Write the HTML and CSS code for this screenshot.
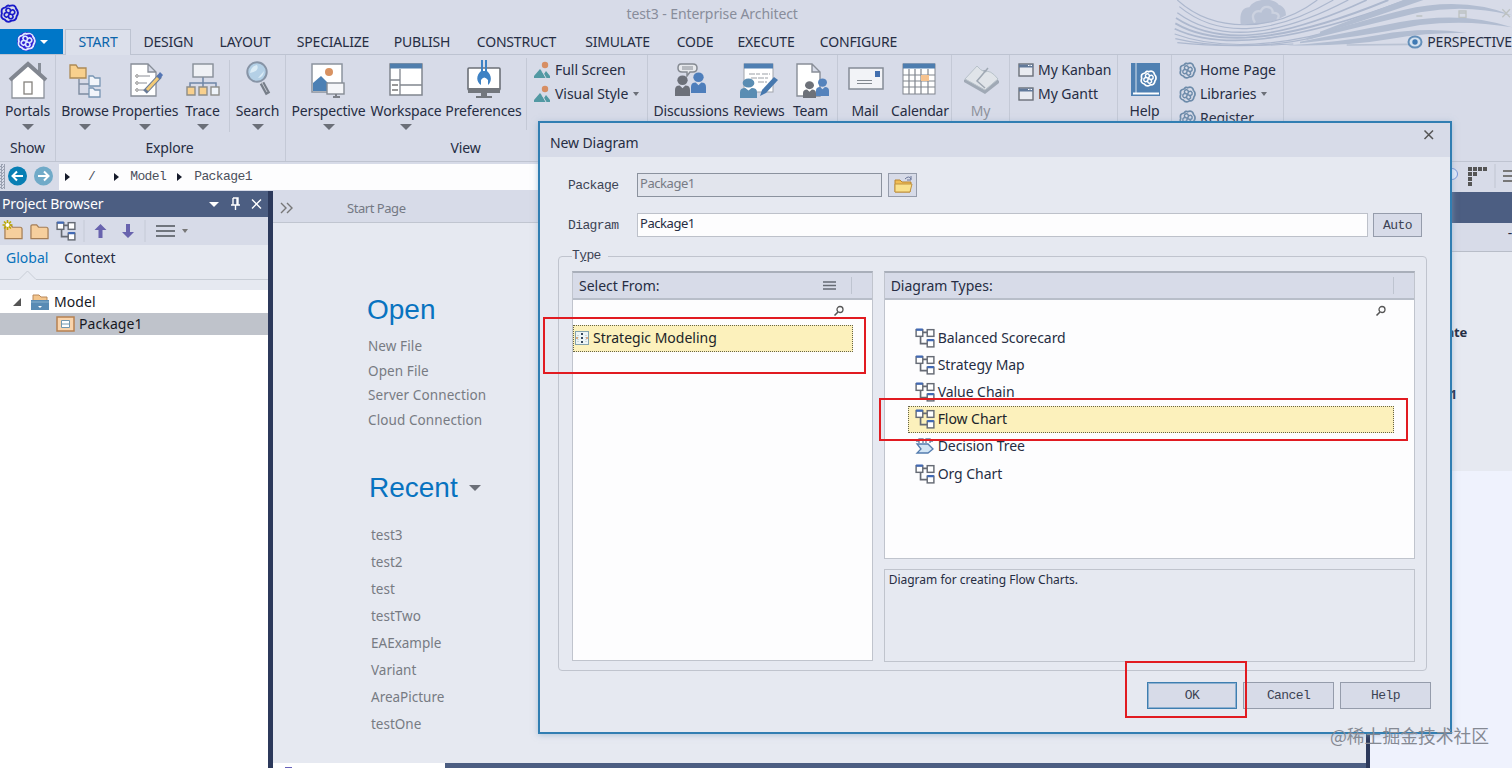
FILE: index.html
```
<!DOCTYPE html>
<html lang="en">
<head>
<meta charset="utf-8">
<title>test3 - Enterprise Architect</title>
<link rel="stylesheet" href="styles.css">
</head>
<body>
<svg class="defs" width="0" height="0" aria-hidden="true">
  <symbol id="knot" viewBox="0 0 20 20">
    <path d="M10 2Q16 0 17 5Q20.500 9 17.500 13Q17 18 12 17.500Q8 20.500 5 16.500Q0 15 2 10Q.5 4 6 3.500Q8 .5 10 2Z" fill="none" stroke="currentColor" stroke-width="2"/>
    <path d="M10 10C6 9 5 6 8 4.500C11 4 12 7 10 10C11 6 14 5 15.500 8C16 11 13 12 10 10C14 11 15 14 12 15.500C9 16 8 13 10 10C9 14 6 15 4.500 12C4 9 7 8 10 10" fill="none" stroke="currentColor" stroke-width="1.700"/>
  </symbol>
  <symbol id="diag" viewBox="0 0 18 18">
    <path d="M7 4H11M5 8V14H11" fill="none" stroke="#666b75" stroke-width="1.500"/>
    <g fill="#fff" stroke="#666b75" stroke-width="1.300"><rect x="1" y="1.500" width="6" height="6"/><rect x="11" y="1.500" width="6" height="6"/><rect x="11" y="11" width="6" height="6"/></g>
    <path d="M1 1.500H7M11 11H17" stroke="#4169b5" stroke-width="2"/>
  </symbol>
  <symbol id="picture" viewBox="0 0 18 18">
    <path d="M1 17V15L7 8L11 13L13 10L17 15V17Z" fill="#5299a3"/><circle cx="12" cy="4" r="3.200" fill="#d78e63"/><path d="M9 10L13 17" stroke="#d7dbe8" stroke-width="1"/>
  </symbol>
  <symbol id="win" viewBox="0 0 16 14">
    <rect x="1" y="1" width="14" height="12" fill="#e9ebf1" stroke="#6b7079" stroke-width="1.400"/><path d="M1 3H15" stroke="#61799a" stroke-width="3"/><path d="M10 2.500H14" stroke="#fff" stroke-dasharray="1.500 1"/>
  </symbol>
  <symbol id="lens" viewBox="0 0 12 12"><circle cx="7" cy="4.500" r="3" fill="none" stroke="#555" stroke-width="1.300"/><path d="M5 7L1.500 10.500" stroke="#555" stroke-width="1.600"/></symbol>
  <symbol id="person" viewBox="0 0 16 24" preserveAspectRatio="none"><circle cx="8" cy="6" r="5.500"/><path d="M0 24V17Q0 12 5 12L8 15L11 12Q16 12 16 17V24Z"/></symbol>
  <symbol id="folder" viewBox="0 0 20 18"><path d="M1 16V3Q1 1.500 2.500 1.500H7L9 4H17Q19 4 19 6V16Z" fill="#f6cf9d" stroke="#a57e56" stroke-width="1.300"/></symbol>
</svg>

<div class="app">
  <header class="titlebar">
    <svg class="app-logo" width="19" height="19"><use href="#knot"/></svg>
    <span class="window-title">test3 - Enterprise Architect</span>
    <svg class="waves" width="372" height="54" viewBox="0 0 1116 162">
      <path d="M302 72C298 38 308 22 328 22C342-6 402-8 416 14C434 20 438 34 438 46C400 68 350 78 302 72Z" fill="#b9c2d5"/>
      <path d="M345 68C330 45 345 30 362 34C372 12 400 20 398 38C416 38 420 48 412 58" fill="none" stroke="#ccd2e0" stroke-width="7"/>
      <g fill="none" stroke="#adb8ce" stroke-width="3.500">
        <path d="M112 0C220 98 400 100 532 0"/>
        <path d="M118 20C230 112 390 110 580 0"/>
        <path d="M112 38C230 124 400 118 625 0" stroke-width="4"/>
        <path d="M108 54C230 134 410 126 680 0" stroke-width="5"/>
        <path d="M106 70C230 142 430 130 745 0" stroke-width="6"/>
        <path d="M104 86C240 150 450 130 790 4" stroke-width="5"/>
        <path d="M104 102C240 152 430 142 640 74"/>
        <path d="M106 116C230 146 400 142 520 112"/>
        <path d="M112 128C220 140 350 138 460 132"/>
      </g>
      <path d="M540 95Q680 42 790 0H850Q690 56 540 103Z" fill="#b2bdd1"/>
      <path d="M500 113Q700 52 790 30Q970-12 1116 46Q980 12 840 37Q680 76 500 120Z" fill="#b2bdd1"/>
      <path d="M480 125Q650 92 780 66Q970 32 1116 82Q980 58 840 75Q660 111 480 130Z" fill="#b2bdd1"/>
      <path d="M440 136Q600 126 720 104Q850 80 980 98Q850 98 750 117Q620 140 440 136Z" fill="#b2bdd1"/>
      <path d="M620 135L810 133" stroke="#b9c2d3" stroke-width="5"/>
      <path d="M829 48H847M957 33H978V52H957ZM957 39H978M1087 28L1110 52M1110 28L1087 52" stroke="#bdc2c2" stroke-width="4" fill="none"/>
    </svg>
  </header>

  <nav class="tabs">
    <div class="file-tab"><svg class="file-logo" width="19" height="19"><use href="#knot"/></svg><i class="caret caret-white"></i></div>
    <span class="tab tab-start">START</span><span class="tab tab-design">DESIGN</span><span class="tab tab-layout">LAYOUT</span><span class="tab tab-specialize">SPECIALIZE</span><span class="tab tab-publish">PUBLISH</span><span class="tab tab-construct">CONSTRUCT</span><span class="tab tab-simulate">SIMULATE</span><span class="tab tab-code">CODE</span><span class="tab tab-execute">EXECUTE</span><span class="tab tab-configure">CONFIGURE</span>
    <span class="perspective"><svg width="16" height="14" viewBox="0 0 16 14"><ellipse cx="8" cy="7" rx="6.500" ry="5.500" fill="#d4e1ef" stroke="#638fb9" stroke-width="2"/><circle cx="8" cy="7" r="2.700" fill="#3f79b3"/></svg>PERSPECTIVE</span>
  </nav>

  <section class="ribbon">
    <div class="group g-show">
      <div class="tools">
        <div class="tool w55"><svg width="40" height="38" viewBox="0 0 40 38"><path d="M30 2H33V14L30 10Z" fill="#888e98"/><path d="M4 18L20 3L36 18V37H4Z" fill="#fff" stroke="#8d929b" stroke-width="1.300"/><path d="M2 19L20 3L38 19" fill="none" stroke="#818690" stroke-width="4"/><rect x="16" y="21" width="8" height="12" fill="#fff" stroke="#85827d" stroke-width="1.300"/></svg><b>Portals</b><i class="caret"></i></div>
      </div>
      <div class="group-name">Show</div>
    </div>
    <div class="group g-explore">
      <div class="tools">
        <div class="tool w58"><svg width="34" height="38" viewBox="0 0 34 38"><path d="M11 18V33H21M11 23H21" fill="none" stroke="#7e8ca0" stroke-width="1.400"/><path d="M2 17V4H8L10 7H18V17Z" fill="#f8d08d" stroke="#ad8a55" stroke-width="1.300"/><path d="M21 25V15H25L27 17H32V25ZM21 36V27H25L27 29H32V36Z" fill="#f2f5fa" stroke="#7895b3" stroke-width="1.300"/></svg><b>Browse</b><i class="caret"></i></div>
        <div class="tool w62"><svg width="36" height="38" viewBox="0 0 36 38"><path d="M4 3H21L29 11V35H4ZM21 3V11H29" fill="#fff" stroke="#878d97" stroke-width="1.300"/><path d="M12 15H23M12 22H20M12 29H17" stroke="#8c8f97"/><g fill="none" stroke="#888"><circle cx="10" cy="15" r="1.300"/><circle cx="10" cy="22" r="1.300"/><circle cx="10" cy="29" r="1.300"/></g><path d="M18 31L33 15" stroke="#687a96" stroke-width="5"/><path d="M20 29L31 17" stroke="#f3ca76" stroke-width="3"/><path d="M30 15L33 18L36 14L33 11Z" fill="#5576b4"/></svg><b>Properties</b><i class="caret"></i></div>
        <div class="tool w53"><svg width="36" height="38" viewBox="0 0 36 38"><path d="M18 16V27M5 27V22H31V27" fill="none" stroke="#6f87a6" stroke-width="1.500"/><rect x="8" y="3" width="20" height="13" fill="#eff1f5" stroke="#878e98" stroke-width="1.400"/><g stroke="#8d8d89" stroke-width="1.400"><path d="M2 26H10V34H2ZM14 26H22V34H14Z" fill="#f8d08d"/><rect x="26" y="26" width="8" height="8" fill="#eff4fa"/></g></svg><b>Trace</b><i class="caret"></i></div>
        <div class="tool w56 separated"><svg width="30" height="38" viewBox="0 0 30 38"><path d="M19 22L25 33" stroke="#777e89" stroke-width="5"/><path d="M18 20L24 31" stroke="#c2c7d0"/><circle cx="14" cy="11" r="9.700" fill="#b4d0e6" stroke="#8794a6" stroke-width="2"/><path d="M7 12Q8 5 14 4Q17 10 7 12M15 17Q20 17 21 10" fill="#dcecf6"/></svg><b>Search</b><i class="caret"></i></div>
      </div>
      <div class="group-name">Explore</div>
    </div>
    <div class="group g-view">
      <div class="tools">
        <div class="tool w85"><svg width="38" height="38" viewBox="0 0 38 38"><rect x="2" y="3" width="30" height="28" fill="#fff" stroke="#8c949f" stroke-width="1.500"/><circle cx="19" cy="11" r="4" fill="#d89262"/><path d="M3 30V22L11 15L18 22V30Z" fill="#4c80b4"/><rect x="17" y="22" width="17" height="11" fill="#f5f6f9" stroke="#868c94" stroke-width="1.400"/><path d="M26 33V36M23 36H30" stroke="#7c8088" stroke-width="2"/></svg><b>Perspective</b><i class="caret"></i></div>
        <div class="tool w70"><svg width="38" height="38" viewBox="0 0 38 38"><rect x="3" y="3" width="32" height="31" fill="#fff" stroke="#81868e" stroke-width="1.500"/><path d="M3 5H35" stroke="#507ead" stroke-width="5"/><path d="M13 8V34M3 19H13M13 24H35" stroke="#81868e" stroke-width="1.300"/><path d="M5 24H11M5 29H11" stroke="#777" stroke-width="1.500"/></svg><b>Workspace</b><i class="caret"></i></div>
        <div class="tool w85"><svg width="38" height="40" viewBox="0 0 38 40"><rect x="3" y="8" width="32" height="22" rx="1" fill="#fff" stroke="#6c7077" stroke-width="1.600"/><path d="M3 28H35V33H3ZM16 33H22V36H27V38H11V36H16Z" fill="#73777d"/><path d="M16 0H18V11H20V0H22V11C27 15 27 22 23 25V20Q19 15 16 20V25C11 22 11 15 16 11Z" fill="#3e82c4"/></svg><b>Preferences</b></div>
        <div class="mini-list separated"><div class="mini"><svg width="18" height="18"><use href="#picture"/></svg>Full Screen</div><div class="mini"><svg width="18" height="18"><use href="#picture"/></svg>Visual Style<i class="caret caret-small"></i></div></div>
      </div>
      <div class="group-name">View</div>
    </div>
    <div class="group g-collab"><div class="tools">
      <div class="tool w86"><svg width="36" height="38" viewBox="0 0 36 38"><path d="M8 3H20Q24 3 24 7Q24 11 20 11H17L14 15V11H9Q5 11 5 7Q5 3 8 3Z" fill="#e7e9ed" stroke="#858a92" stroke-width="1.500"/><path d="M9 6H20M9 8H20" stroke="#858a92"/><svg x="2" y="14" width="15" height="21" fill="#6c7079"><use href="#person"/></svg><svg x="18" y="11" width="15" height="21" fill="#4e7ebb"><use href="#person"/></svg></svg><b>Discussions</b></div>
      <div class="tool w50"><svg width="38" height="38" viewBox="0 0 38 38"><rect x="4" y="3" width="29" height="28" fill="#fff" stroke="#a1a5ac"/><path d="M4 5H33" stroke="#4f7fb2" stroke-width="5"/><path d="M9 13H20M22 13H30M11 17H28M18 21H27" stroke="#9a9fa6" stroke-dasharray="6 1"/><svg x="0" y="17" width="17" height="20" fill="#5a8db3"><use href="#person"/></svg><path d="M20 35L22 29L34 16L38 19L26 32Z" fill="#4778ae"/></svg><b>Reviews</b></div>
      <div class="tool w53"><svg width="36" height="38" viewBox="0 0 36 38"><path d="M4 3H19L27 11V35H4ZM19 3V11H27" fill="#fff" stroke="#898e98" stroke-width="1.400"/><svg x="23" y="17" width="13" height="18" fill="#5583bc"><use href="#person"/></svg><svg x="10" y="20" width="13" height="17" fill="#6d7179"><use href="#person"/></svg></svg><b>Team</b></div>
    </div></div>
    <div class="group g-mail"><div class="tools">
      <div class="tool w54"><svg width="38" height="38" viewBox="0 0 38 38"><rect x="3" y="7" width="34" height="21" fill="#f2f3f7" stroke="#858c96" stroke-width="1.500"/><rect x="29" y="10" width="5" height="6" fill="#426eae"/><path d="M11 19.500H26M11 22.500H26" stroke="#82888f"/></svg><b>Mail</b></div>
      <div class="tool w56"><svg width="38" height="38" viewBox="0 0 38 38"><rect x="2" y="3" width="32" height="30" fill="#fff" stroke="#80858e"/><path d="M2 5H34" stroke="#4d7daf" stroke-width="5"/><path d="M8 8V33M14 8V33M20 8V33M27 8V33M2 14H34M2 20H34M2 26H34" stroke="#80858e" stroke-width="1.200"/><rect x="20" y="14" width="8" height="6" fill="#f7c38f"/></svg><b>Calendar</b></div>
    </div></div>
    <div class="group g-my"><div class="tools"><div class="tool w57 disabled"><svg width="38" height="38" viewBox="0 0 38 38"><path d="M2 19L14 10L24 9L37 20V22L23 33L2 21Z" fill="#a0a9b5"/><path d="M3 18L15 5Q18 9 23 11Q28 8 36 18L23 29Z" fill="#e0e4e9" stroke="#b8c2ca"/><path d="M26 7L15 20L23 27" fill="none" stroke="#9fa8b3" stroke-width="1.500"/></svg><b>My</b></div></div></div>
    <div class="group g-win"><div class="mini-list"><div class="mini"><svg width="16" height="14"><use href="#win"/></svg>My Kanban</div><div class="mini"><svg width="16" height="14"><use href="#win"/></svg>My Gantt</div></div></div>
    <div class="group g-help"><div class="tools"><div class="tool w53"><svg width="34" height="38" viewBox="0 0 34 38"><rect x="3" y="2" width="29" height="33" fill="#4f80b2"/><path d="M8 2V32" stroke="#d7e1ed"/><path d="M5 32.500H31" stroke="#fff" stroke-width="2"/><svg x="12" y="9" width="17" height="17" color="#fff"><use href="#knot"/></svg></svg><b>Help</b></div></div></div>
    <div class="group g-home"><div class="mini-list"><div class="mini"><svg width="17" height="17"><use href="#knot"/></svg>Home Page</div><div class="mini"><svg width="17" height="17"><use href="#knot"/></svg>Libraries<i class="caret caret-small"></i></div><div class="mini"><svg width="17" height="17"><use href="#knot"/></svg>Register</div></div></div>
  </section>

  <div class="navbar">
    <i class="grip"></i>
    <svg width="54" height="26" viewBox="0 0 54 26"><circle cx="12.500" cy="12" r="9.500" fill="#087fb4"/><circle cx="38.500" cy="12" r="9.500" fill="#70aac8"/><g fill="none" stroke="#fff" stroke-width="2"><path d="M18 12H8M12 7.500L7.500 12L12 16.500M33 12H43M39 7.500L43.500 12L39 16.500"/></g></svg>
    <div class="crumbs"><i class="arrow"></i><span class="slash">/</span><i class="arrow"></i><span class="crumb-model">Model</span><i class="arrow"></i><span class="crumb-package">Package1</span></div>
    <svg class="nav-right" width="66" height="28" viewBox="0 0 66 28"><circle cx="6" cy="11" r="5.500" fill="#e1eafb" stroke="#7795d8"/><path d="M22 6H41" stroke="#555" stroke-width="4" stroke-dasharray="4 1"/><path d="M22 11H31M22 16H26M22 21H26" stroke="#555" stroke-width="4" stroke-dasharray="4 1"/><path d="M49 1V25" stroke="#c0c5d1"/><path d="M57 8H68M57 13H68M57 18H68" stroke="#777" stroke-width="2"/></svg>
  </div>

  <main class="workspace">
    <aside class="browser">
      <div class="panel-title"><span>Project Browser</span><svg width="62" height="20" viewBox="0 0 62 20"><path d="M3 8H13L8 13Z" fill="#fff"/><g fill="none" stroke="#fff" stroke-width="1.400"><path d="M27 4H32V11M27 4V11M25 11H34M29.500 11V16M31 4V11M46 5.500L55 14.500M55 5.500L46 14.500"/></g></svg></div>
      <div class="panel-tools"><svg width="192" height="28" viewBox="0 0 192 28"><svg x="4" y="6" width="19" height="18"><use href="#folder"/></svg><path d="M7.500 3V13M2.500 8H12.500M4 4.500L11 11.500M11 4.500L4 11.500" stroke="#baa800" stroke-width="1.600"/><circle cx="7.500" cy="8" r="2" fill="#fff"/><svg x="30" y="6" width="19" height="18"><use href="#folder"/></svg><svg x="56" y="4" width="20" height="20"><use href="#diag"/></svg><path d="M84 3V25M145 3V25" stroke="#c5cad6"/><path d="M100.500 7L106.500 13H102.500V21H98.500V13H94.500ZM128 21L134 15H130V7H126V15H122Z" fill="#6863ae"/><path d="M156 9H175M156 14H175M156 19H175" stroke="#70757d" stroke-width="2"/><path d="M182 12H188L185 16Z" fill="#777"/></svg></div>
      <div class="panel-tabs"><span class="selected-tab">Global</span><span>Context</span></div>
      <svg class="notch" width="268" height="19" viewBox="0 0 268 19"><path d="M0 8.500H19L27.500 0L36 8.500H268" fill="none" stroke="#c8cdd6"/></svg>
      <div class="tree">
        <div class="node"><svg width="10" height="10" viewBox="0 0 10 10"><path d="M9 1V9H1Z" fill="#555"/></svg><svg width="20" height="20" viewBox="0 0 20 20"><path d="M3 9V3H9L11 5H17V9" fill="#f3c58c" stroke="#ba895a"/><path d="M1 8H19V18H1Z" fill="#598bb4"/><path d="M1 10H19" stroke="#8bb2ce"/><path d="M8 14L10 16L12 14Z" fill="#fff"/></svg><span>Model</span></div>
        <div class="node node-child"><svg width="19" height="16" viewBox="0 0 19 16"><rect x="1" y="1" width="17" height="14" fill="#f9d4ac" stroke="#b68152" stroke-width="1.500"/><path d="M5.500 4.500H13.500V11.500H5.500ZM5.500 8H13.500" fill="#fff" stroke="#7298af"/></svg><span>Package1</span></div>
      </div>
    </aside>
    <div class="splitter"></div>
    <section class="start-page">
      <div class="page-tabs"><svg width="14" height="12" viewBox="0 0 14 12"><path d="M1 1L6 6L1 11M7 1L12 6L7 11" fill="none" stroke="#777" stroke-width="1.400"/></svg><span>Start Page</span></div>
      <div class="start-content">
        <h1>Open</h1>
        <ul class="open-list"><li>New File</li><li>Open File</li><li>Server Connection</li><li>Cloud Connection</li></ul>
        <h1 class="recent">Recent<i class="caret"></i></h1>
        <ul class="recent-list"><li>test3</li><li>test2</li><li>test</li><li>testTwo</li><li>EAExample</li><li>Variant</li><li>AreaPicture</li><li>testOne</li></ul>
      </div>
      <div class="page-bottom"><div class="bottom-tab"><i></i></div></div>
    </section>
    <div class="splitter right-splitter"></div>
    <aside class="properties">
      <div class="prop-title"></div><div class="prop-tools">-</div>
      <div class="prop-body"><strong>Template</strong><strong class="prop-version">1.1</strong></div>
    </aside>
  </main>

  <section class="dialog">
    <div class="dialog-title"><span>New Diagram</span><svg width="12" height="12" viewBox="0 0 12 12"><path d="M1.500 1.500L10 10M10 1.500L1.500 10" stroke="#555" stroke-width="1.500"/></svg></div>
    <div class="dialog-body">
      <div class="field"><label>Package</label><div class="input input-disabled">Package1</div><div class="button browse-button"><svg width="22" height="20" viewBox="0 0 22 20"><path d="M3 17V5H8L10 7H19L18 17Z" fill="#f1bd54" stroke="#b98531"/><path d="M3 9H20L18 17H3Z" fill="#fae18c" stroke="#c19340"/><path d="M13 4Q17 0 19 4M19 1V5H15" fill="none" stroke="#687498"/></svg></div></div>
      <div class="field field-diagram"><label>Diagram</label><div class="input">Package1</div><div class="button auto-button">Auto</div></div>
      <fieldset>
        <legend>T<u>y</u>pe</legend>
        <div class="pickers">
          <div class="picker picker-from">
            <div class="picker-head"><span>Select From:</span><svg width="13" height="10" viewBox="0 0 13 10"><path d="M0 1H13M0 4.500H13M0 8H13" stroke="#666b74" stroke-width="1.300"/></svg><i></i></div>
            <div class="search"><svg width="12" height="12"><use href="#lens"/></svg></div>
            <div class="option from-option selected"><svg width="14" height="14" viewBox="0 0 14 14"><rect x=".5" y=".5" width="13" height="13" fill="#edf4f5" stroke="#85a3ad"/><path d="M7 2V13" stroke="#36495e" stroke-width="2" stroke-dasharray="2 2"/><path d="M3 4V11M11 4V11" stroke="#a6bfca" stroke-dasharray="1 1"/><path d="M1 7H3M11 7H13" stroke="#d89262" stroke-width="1.500"/></svg>Strategic Modeling</div>
          </div>
          <div class="types-column">
            <div class="picker picker-types">
              <div class="picker-head"><span>Diagram Types:</span><i></i></div>
              <div class="search"><svg width="12" height="12"><use href="#lens"/></svg></div>
              <div class="type-list">
                <div class="option"><svg width="20" height="20"><use href="#diag"/></svg>Balanced Scorecard</div>
                <div class="option"><svg width="20" height="20"><use href="#diag"/></svg>Strategy Map</div>
                <div class="option"><svg width="20" height="20"><use href="#diag"/></svg>Value Chain</div>
                <div class="option selected"><svg width="20" height="20"><use href="#diag"/></svg>Flow Chart</div>
                <div class="option"><svg width="20" height="20" viewBox="0 0 20 20"><path d="M4 7V3H8V7M11 7V3H15V7M4 5H1M15 5H18" fill="#fff" stroke="#667b9c" stroke-width="1.300"/><path d="M2 8H13L18 13L13 17H2L6 13Z" fill="#d2e5f5" stroke="#547cae" stroke-width="1.300"/></svg>Decision Tree</div>
                <div class="option"><svg width="20" height="20"><use href="#diag"/></svg>Org Chart</div>
              </div>
            </div>
            <div class="description">Diagram for creating Flow Charts.</div>
          </div>
        </div>
      </fieldset>
      <div class="actions"><div class="button default-button">OK</div><div class="button">Cancel</div><div class="button">Help</div></div>
    </div>
  </section>
  <i class="mark mark-from"></i><i class="mark mark-flow"></i><i class="mark mark-ok"></i>
  <span class="watermark">@稀土掘金技术社区</span>
</div>
</body>
</html>
```
FILE: styles.css
```
* { box-sizing: border-box; }
body { margin: 0; overflow: hidden; font-family: "Noto Sans", "Open Sans", sans-serif; font-size: 14px; line-height: 20px; letter-spacing: -.15px; color: #262d43; }
svg { display: block; flex: none; }
.defs { position: absolute; }
.app { position: relative; width: 1512px; height: 768px; overflow: hidden; background: #d7dbe8; display: flex; flex-direction: column; }
span, b, .mini, .option { white-space: nowrap; }
.titlebar { height: 29px; flex: none; display: flex; justify-content: center; color: #888d9b; padding-top: 4px; position: relative; }
.app-logo { position: absolute; left: 0; top: 4px; color: #191ac9; }
.window-title { width: 171px; margin-right: 88px; letter-spacing: -.1px; }
.waves { position: absolute; left: 1140px; top: 0; }
.tabs { height: 26px; flex: none; display: flex; position: relative; border-bottom: 1px solid #bdc3d1; line-height: 25px; }
.file-tab { width: 63px; height: 25px; background: #0077c8; display: flex; align-items: center; padding-left: 17px; gap: 4px; margin-right: 2px; }
.file-logo { color: #ddeaff; background: #3220d5; border-radius: 50%; }
.tab { display: block; text-align: center; flex: none; letter-spacing: -.2px; }
.tab-start { width: 66px; color: #0b65ab; border: 1px solid #bdc3d1; border-bottom: 0; background: #dce0eb; height: 26px; line-height: 23px; }
.tab-design { width: 75px; }
.tab-layout { width: 78px; }
.tab-specialize { width: 98px; }
.tab-publish { width: 80px; }
.tab-construct { width: 109px; }
.tab-simulate { width: 93px; }
.tab-code { width: 62px; }
.tab-execute { width: 80px; }
.tab-configure { width: 105px; }
.perspective { margin-left: auto; display: flex; align-items: center; gap: 4px; letter-spacing: -.15px; }
.ribbon { height: 107px; flex: none; display: flex; border-bottom: 1px solid #bfc4d1; }
.group { height: 106px; border-right: 1px solid #c4c9d6; display: flex; flex-direction: column; flex: none; padding-top: 5px; }
.g-show { width: 56px; }
.g-explore { width: 230px; }
.g-view { width: 362px; }
.g-collab { width: 190px; }
.g-mail { width: 114px; }
.g-my { width: 58px; }
.g-win { width: 108px; padding-left: 8px; }
.g-help { width: 54px; }
.g-home { width: 112px; padding-left: 7px; }
.tools { height: 77px; display: flex; }
.tool { display: flex; flex-direction: column; align-items: center; flex: none; }
.tool > svg { height: 40px; }
.tool b { font-weight: 400; line-height: 20px; margin-bottom: 3px; margin-top: 1px; }
.w50 { width: 50px; }
.w53 { width: 53px; }
.w54 { width: 54px; }
.w55 { width: 55px; }
.w56 { width: 56px; }
.w57 { width: 57px; }
.w58 { width: 58px; }
.w62 { width: 62px; }
.w70 { width: 70px; }
.w85 { width: 85px; }
.w86 { width: 86px; }
.disabled { color: #8e929c; }
.separated { border-left: 1px solid #c4c9d6; height: 72px; }
.mini-list { width: 120px; flex: none; margin-top: -2px; }
.separated.mini-list { padding-left: 6px; }
.mini { height: 24px; display: flex; align-items: center; gap: 4px; letter-spacing: -.05px; }
.mini svg { color: #6d8baa; }
.caret { border: 6px solid transparent; border-top-color: #6b6f78; border-bottom: 0; width: 0; height: 0; flex: none; }
.caret-small { border-width: 4px 3px 0; margin-left: 1px; }
.caret-white { border-width: 4px 4px 0; border-top-color: #fff; }
.group-name { text-align: center; line-height: 22px; }
.g-view .group-name { padding-right: 2px; }
.g-explore .group-name { padding-right: 2px; }
.navbar { height: 29px; flex: none; display: flex; align-items: center; }
.grip { width: 6px; height: 25px; background: repeating-conic-gradient(#9aa1b1 0 25%, #d7dbe8 0 50%) 0 0 / 3px 3px; }
.crumbs { height: 26px; width: 1390px; background: #fdfdfe; flex: none; display: flex; align-items: center; padding-left: 6px; font: 13px "Liberation Mono", monospace; letter-spacing: -.6px; color: #4b505c; }
.arrow { width: 0; height: 0; border: 4px solid transparent; border-left: 5px solid #161b2b; border-right: 0; }
.slash { margin: 0 19px 0 18px; }
.crumb-model { margin: 0 11px 0 11px; }
.crumb-package { margin-left: 12px; }
.nav-right { margin-left: -3px; }
.workspace { height: 577px; display: flex; }
.browser { width: 268px; background: #fff; flex: none; }
.panel-title { height: 26px; background: #4c5e82; color: #fff; display: flex; justify-content: space-between; align-items: center; padding-left: 2px; }
.panel-tools { height: 28px; background: #d7dbe8; }
.panel-tabs { height: 26px; background: #e6e9f1; padding: 3px 6px; display: flex; gap: 16px; letter-spacing: 0; }
.selected-tab { color: #0872ba; }
.notch { background: #e6e9f1; }
.tree { padding-top: 1px; color: #17191f; letter-spacing: .1px; }
.node { height: 22px; display: flex; align-items: center; gap: 4px; padding-left: 12px; }
.node svg:first-child { margin-right: 4px; }
.node-child { background: #bfc3cb; padding-left: 56px; gap: 0; }
.splitter { width: 5px; background: #2c395b; flex: none; }
.start-page { width: 1093px; background: #e6e9f1; display: flex; flex-direction: column; flex: none; }
.page-tabs { height: 32px; background: #d7dbe8; border-bottom: 1px solid #c0c5d0; display: flex; align-items: center; padding: 3px 0 0 7px; gap: 53px; color: #747984; font-size: 13px; letter-spacing: -.5px; }
.page-tabs { letter-spacing: -.45px; }
.start-content { height: 540px; padding: 69px 0 0 94px; color: #777b83; }
h1 { font: 400 28px/36px "Liberation Sans", Arial, sans-serif; color: #0873c0; margin: 0; letter-spacing: 0; }
ul { list-style: none; margin: 0; padding: 0; }
.open-list { font-size: 13.500px; padding: 6px 0 0 1px; letter-spacing: .1px; }
.open-list li { height: 24.700px; line-height: 25px; }
.recent { padding: 37px 0 0 2px; display: flex; align-items: center; gap: 11px; }
.recent-list { padding: 16px 0 0 4px; font-size: 13.500px; letter-spacing: 0; }
.recent-list li { height: 27.100px; line-height: 27px; }
.page-bottom { height: 5px; background: #4c5e82; }
.bottom-tab { width: 172px; height: 5px; background: #fff; padding: 4px 0 0 12px; }
.bottom-tab i { display: block; width: 7px; height: 1px; background: #6762ba; }
.right-splitter { width: 4px; }
.properties { flex: 1; background: #eff2fd; }
.prop-title { height: 32px; background: #4c5e82; border-top: 1px solid #d7dbe8; }
.prop-tools { height: 29px; background: #d7dbe8; border-bottom: 1px solid #b8bdc8; text-align: right; }
.prop-body { height: 219px; background: #e6e9f1; padding: 70px 0 0 33px; display: flex; flex-direction: column; font-size: 13px; width: 142px; }
.prop-body strong { width: 64px; text-align: right; letter-spacing: -.2px; }
.prop-version { padding-right: 10px; margin-top: 42px; }
.dialog { position: absolute; left: 538px; top: 121px; width: 914px; height: 613px; border: 2px solid #317eb2; background: #e6e9f1; box-shadow: 0 1px 6px #8ba9c799; }
.dialog-title { height: 34px; background: #d7dbe8; display: flex; justify-content: space-between; padding: 10px 15px 0 10px; letter-spacing: -.1px; }
.dialog-title svg { margin-top: -4px; }
.dialog-body { padding: 16px 19px 0 18px; }
.field { display: flex; height: 24px; margin-left: 10px; }
.field-diagram { margin-top: 16px; }
label, legend, .button { font: 13px/26px "Liberation Mono", monospace; letter-spacing: -.6px; color: #3c4354; }
label { width: 69px; }
.input { width: 731px; background: #fdfdfe; border: 1px solid #bdc1ca; padding: 0 2px; line-height: 19px; font-size: 13px; letter-spacing: -.45px; }
.input-disabled { width: 245px; background: #e2e5ed; color: #777b85; border-color: #8b929e; }
.button { border: 1px solid #959cab; background: #d7dbe8; text-align: center; }
.browse-button { margin-left: 6px; width: 29px; padding: 1px 3px; }
.auto-button { width: 49px; margin-left: 5px; line-height: 24px; }
fieldset { width: 869px; height: 425px; margin: 9px 0 0; padding: 5px 11px 0 13px; border: 1px solid #c0c4ce; border-radius: 4px; min-width: 0; }
legend { padding: 0 7px 0 0; margin-left: 0; line-height: 20px; height: 20px; }
.pickers { display: flex; gap: 11px; }
.picker { border: 1px solid #c0c4cd; border-top: 2px solid #a9afba; background: #fdfdfe; }
.picker-from { width: 301px; height: 390px; }
.types-column { width: 532px; }
.picker-types { height: 288px; }
.picker-head { height: 27px; background: #d7dbe8; border-bottom: 2px solid #b8bec9; display: flex; align-items: center; padding-left: 6px; letter-spacing: 0; }
.picker-head span { flex: 1; }
.picker-head i { height: 17px; width: 21px; margin-left: 15px; border-left: 1px solid #bec4d0; }
.search { display: flex; justify-content: flex-end; padding: 5px 27px 0 0; height: 25px; }
.option { display: flex; align-items: center; height: 27.200px; gap: 3px; padding-left: 7px; letter-spacing: -.05px; }
.selected { border: 1px dotted #666447; background: #fcf1bc; color: #202429; }
.from-option { width: 280px; padding: 0 0 2px 1px; gap: 4px; letter-spacing: 0; }
.type-list { width: 486px; margin: -1px 0 0 23px; }
.type-list .selected { padding-left: 6px; }
.description { height: 93px; border: 1px solid #c0c4cd; margin-top: 10px; padding: 0 4px; font-size: 12px; letter-spacing: 0; }
.actions { display: flex; gap: 6px; justify-content: flex-end; padding-top: 11px; margin-right: 0; }
.actions .button { width: 91px; height: 27px; }
.actions .default-button { width: 90px; border-color: #3e7eb0; box-shadow: inset 0 0 0 1px #8db0d0; }
.mark { position: absolute; border: 2px solid #e11b21; }
.mark-from { left: 543px; top: 317px; width: 323px; height: 57px; }
.mark-flow { left: 879px; top: 398px; width: 529px; height: 43px; }
.mark-ok { left: 1125px; top: 661px; width: 122px; height: 57px; }
.watermark { position: absolute; left: 1330px; top: 723px; font: 17.800px/25px "Noto Sans CJK SC", sans-serif; letter-spacing: 0; color: #858993; }
```
